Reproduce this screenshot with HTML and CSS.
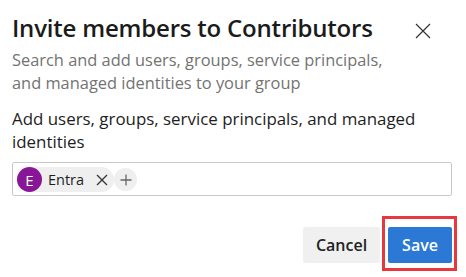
FILE: index.html
```html
<!DOCTYPE html>
<html>
<head>
<meta charset="utf-8">
<link rel="stylesheet" href="styles.css">
</head>
<body>
<div class="dialog">
  <div class="header">
    <h1 class="title">Invite members to Contributors</h1>
    <button class="close" aria-label="Close">
      <svg width="16" height="16" viewBox="0 0 16 16"><path d="M1 1 L15 15 M15 1 L1 15" stroke="#333" stroke-width="1.2" fill="none"/></svg>
    </button>
  </div>
  <p class="subtitle">Search and add users, groups, service principals, and managed identities to your group</p>
  <label class="label">Add users, groups, service principals, and managed identities</label>
  <div class="picker">
    <span class="chip">
      <span class="avatar">E</span>
      <span class="chip-text">Entra</span>
      <svg class="chip-x" width="12" height="12" viewBox="0 0 12 12"><path d="M1 1 L11 11 M11 1 L1 11" stroke="#333" stroke-width="1.3" fill="none"/></svg>
    </span>
    <span class="add">
      <svg width="12" height="12" viewBox="0 0 12 12"><path d="M6 0.5 V11.5 M0.5 6 H11.5" stroke="#666" stroke-width="1.3" fill="none"/></svg>
    </span>
  </div>
  <div class="footer">
    <button class="btn cancel">Cancel</button>
    <span class="save-wrap"><button class="btn save">Save</button></span>
  </div>
</div>
</body>
</html>
```
FILE: styles.css
```css
html, body { margin: 0; padding: 0; background: #fff; }
body { font-family: "Open Sans", "Noto Sans", sans-serif; color: #201f1e; min-height: 277px; }
.dialog { padding: 13px 14px 14px 12px; width: 440px; }
.header { display: flex; justify-content: space-between; align-items: flex-start; }
.title { margin: 0; font-size: 24px; line-height: 30px; font-weight: 600; letter-spacing: -0.2px; color: #1b1b1b; }
.close { border: 0; background: none; padding: 0; width: 16px; height: 16px; margin: 10px 21px 0 0; display: flex; }
.subtitle { margin: 6px 0 0 0; font-size: 16.4px; line-height: 22.5px; color: #737373; width: 390px; }
.label { display: block; margin-top: 14px; font-size: 16.9px; line-height: 22.5px; color: #1e1e1e; width: 420px; }
.picker { box-sizing: border-box; margin-top: 9px; height: 34px; width: 440px; border: 1px solid #c8c8c8; border-radius: 2px; display: flex; align-items: center; padding: 1px 4px 0 4px; }
.chip { display: flex; align-items: center; height: 25px; background: #efefef; border-radius: 13px; padding-right: 6px; }
.avatar { width: 25px; height: 25px; border-radius: 50%; background: #881798; color: #fff; font-size: 15px; display: flex; align-items: center; justify-content: center; }
.chip-text { margin-left: 6px; font-size: 14.5px; color: #1e1e1e; }
.chip-x { margin-left: 12px; }
.add { width: 23px; height: 23px; border-radius: 50%; background: #efefef; display: flex; align-items: center; justify-content: center; }
.footer { display: flex; justify-content: flex-end; align-items: center; margin-top: 31px; gap: 8px; width: 440px; }
.btn { font-family: inherit; font-size: 16px; font-weight: 600; border: 0; border-radius: 2px; height: 36px; padding: 0; display: block; }
.cancel { background: #f0f0f0; color: #222; width: 77px; }
.save-wrap { position: relative; display: block; }
.save-wrap::after { content: ""; position: absolute; left: -6px; right: -5px; top: -11px; bottom: -8px; border: 3px solid #e8383d; }
.save { background: #2b79d4; color: #fff; width: 64px; }
```
